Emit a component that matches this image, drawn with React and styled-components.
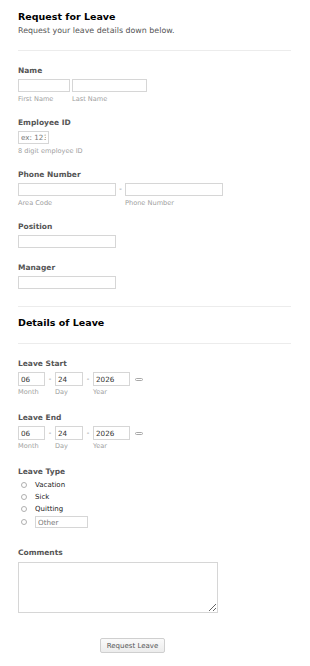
import React from "react";
import styled, { createGlobalStyle } from "styled-components";

const GlobalStyle = createGlobalStyle`
  body {
    margin: 0;
    background: #ffffff;
    font-family: "DejaVu Sans", Verdana, sans-serif;
  }
`;

function App() {
  return (
    <>
      <GlobalStyle />
      <Form>
        <Title>Request for Leave</Title>
        <Subtitle>Request your leave details down below.</Subtitle>
        <Divider />

        <Field>
          <Label>Name</Label>
          <Row>
            <Part>
              <Input w={52} />
              <SubLabel>First Name</SubLabel>
            </Part>
            <Part>
              <Input w={75} />
              <SubLabel>Last Name</SubLabel>
            </Part>
          </Row>
        </Field>

        <Field>
          <Label>Employee ID</Label>
          <Input w={31} placeholder="ex: 12345678" />
          <SubLabel>8 digit employee ID</SubLabel>
        </Field>

        <Field>
          <Label>Phone Number</Label>
          <Row>
            <Part>
              <Input w={98} />
              <SubLabel>Area Code</SubLabel>
            </Part>
            <Dash>-</Dash>
            <Part>
              <Input w={98} />
              <SubLabel>Phone Number</SubLabel>
            </Part>
          </Row>
        </Field>

        <Field>
          <Label>Position</Label>
          <Input w={98} />
        </Field>

        <Field>
          <Label>Manager</Label>
          <Input w={98} />
        </Field>

        <Divider top={17} />
        <SectionTitle>Details of Leave</SectionTitle>
        <Divider />

        <DateField label="Leave Start" />
        <DateField label="Leave End" />

        <Field space={19}>
          <Label>Leave Type</Label>
          <Options>
            {["Vacation", "Sick", "Quitting"].map((t) => (
              <Option key={t}>
                <Radio type="radio" name="type" />
                <OptionText>{t}</OptionText>
              </Option>
            ))}
            <Option>
              <Radio type="radio" name="type" />
              <Input w={53} h={12} placeholder="Other" />
            </Option>
          </Options>
        </Field>

        <Field>
          <Label gap={4}>Comments</Label>
          <TextArea />
        </Field>

        <Button>Request Leave</Button>
      </Form>
    </>
  );
}

function DateField({ label }) {
  return (
    <Field space={17}>
      <Label>{label}</Label>
      <Row>
        <Part>
          <Input w={27} h={14} defaultValue="06" />
          <SubLabel tight>Month</SubLabel>
        </Part>
        <Dash date>-</Dash>
        <Part>
          <Input w={28} h={14} defaultValue="24" />
          <SubLabel tight>Day</SubLabel>
        </Part>
        <Dash date>-</Dash>
        <Part>
          <Input w={37} h={14} defaultValue="2026" />
          <SubLabel tight>Year</SubLabel>
        </Part>
        <CalIcon />
      </Row>
    </Field>
  );
}

export default App;

const Form = styled.div`
  width: 273px;
  padding: 11px 0 20px 18px;
`;

const Title = styled.h1`
  margin: 0;
  font-size: 9.5px;
  line-height: 12px;
  font-weight: bold;
  color: #000;
`;

const SectionTitle = styled(Title)`
  margin: -5px 0 0;
`;

const Subtitle = styled.p`
  margin: 3px 0 0;
  font-size: 7.9px;
  line-height: 10px;
  color: #555;
`;

const Divider = styled.div`
  height: 1px;
  background: #ececec;
  margin-top: ${({ top }) => top || 14}px;
  margin-bottom: 15px;
`;

const Field = styled.div`
  margin-bottom: ${({ space }) => space || 15}px;
`;

const Label = styled.div`
  font-size: 7.5px;
  line-height: 10px;
  font-weight: bold;
  color: #555;
  margin-bottom: ${({ gap }) => gap || 3}px;
`;

const Row = styled.div`
  display: flex;
  align-items: flex-start;
  gap: 2px;
`;

const Part = styled.div`
  display: flex;
  flex-direction: column;
`;

const Input = styled.input`
  display: block;
  box-sizing: border-box;
  width: ${({ w }) => w}px;
  height: ${({ h }) => h || 13}px;
  margin: 0;
  padding: 0 2px;
  border: 1px solid #d6d6d6;
  border-radius: 0;
  background: #fff;
  font-family: "DejaVu Sans", Verdana, sans-serif;
  font-size: 7.2px;
  color: #333;
  outline: none;
  &::placeholder {
    color: #777;
  }
`;

const SubLabel = styled.div`
  margin-top: ${({ tight }) => (tight ? "2px" : "3px")};
  font-size: 6.6px;
  line-height: 8px;
  color: #a0a0a0;
`;

const Dash = styled.span`
  width: ${({ date }) => (date ? 6 : 5)}px;
  text-align: center;
  font-size: 7px;
  line-height: ${({ date }) => (date ? 14 : 13)}px;
  color: #777;
`;

const CalIcon = styled.span`
  box-sizing: border-box;
  width: 8px;
  height: 3px;
  margin: 6px 0 0 3px;
  border: 1px solid #a8a8a8;
  border-radius: 2px;
`;

const Options = styled.div`
  display: flex;
  flex-direction: column;
  margin-top: -1px;
`;

const Option = styled.label`
  display: flex;
  align-items: center;
  height: 12px;
  padding-left: 3px;
  &:last-child {
    height: 14px;
  }
`;

const Radio = styled.input`
  appearance: none;
  box-sizing: border-box;
  width: 6px;
  height: 6px;
  margin: 0 8px 0 0;
  border: 1px solid #b0b0b0;
  border-radius: 50%;
  background: #fff;
`;

const OptionText = styled.span`
  font-size: 7px;
  color: #222;
`;

const TextArea = styled.textarea`
  display: block;
  box-sizing: border-box;
  width: 200px;
  height: 51px;
  margin: 0;
  border: 1px solid #d6d6d6;
  border-radius: 0;
  resize: both;
  outline: none;
`;

const Button = styled.button`
  display: block;
  box-sizing: border-box;
  width: 65px;
  height: 15px;
  margin: 25px 0 0 82px;
  padding: 0;
  border: 1px solid #cfcfcf;
  border-radius: 2px;
  background: linear-gradient(#fafafa, #ececec);
  font-family: "DejaVu Sans", Verdana, sans-serif;
  font-size: 7px;
  color: #555;
`;
